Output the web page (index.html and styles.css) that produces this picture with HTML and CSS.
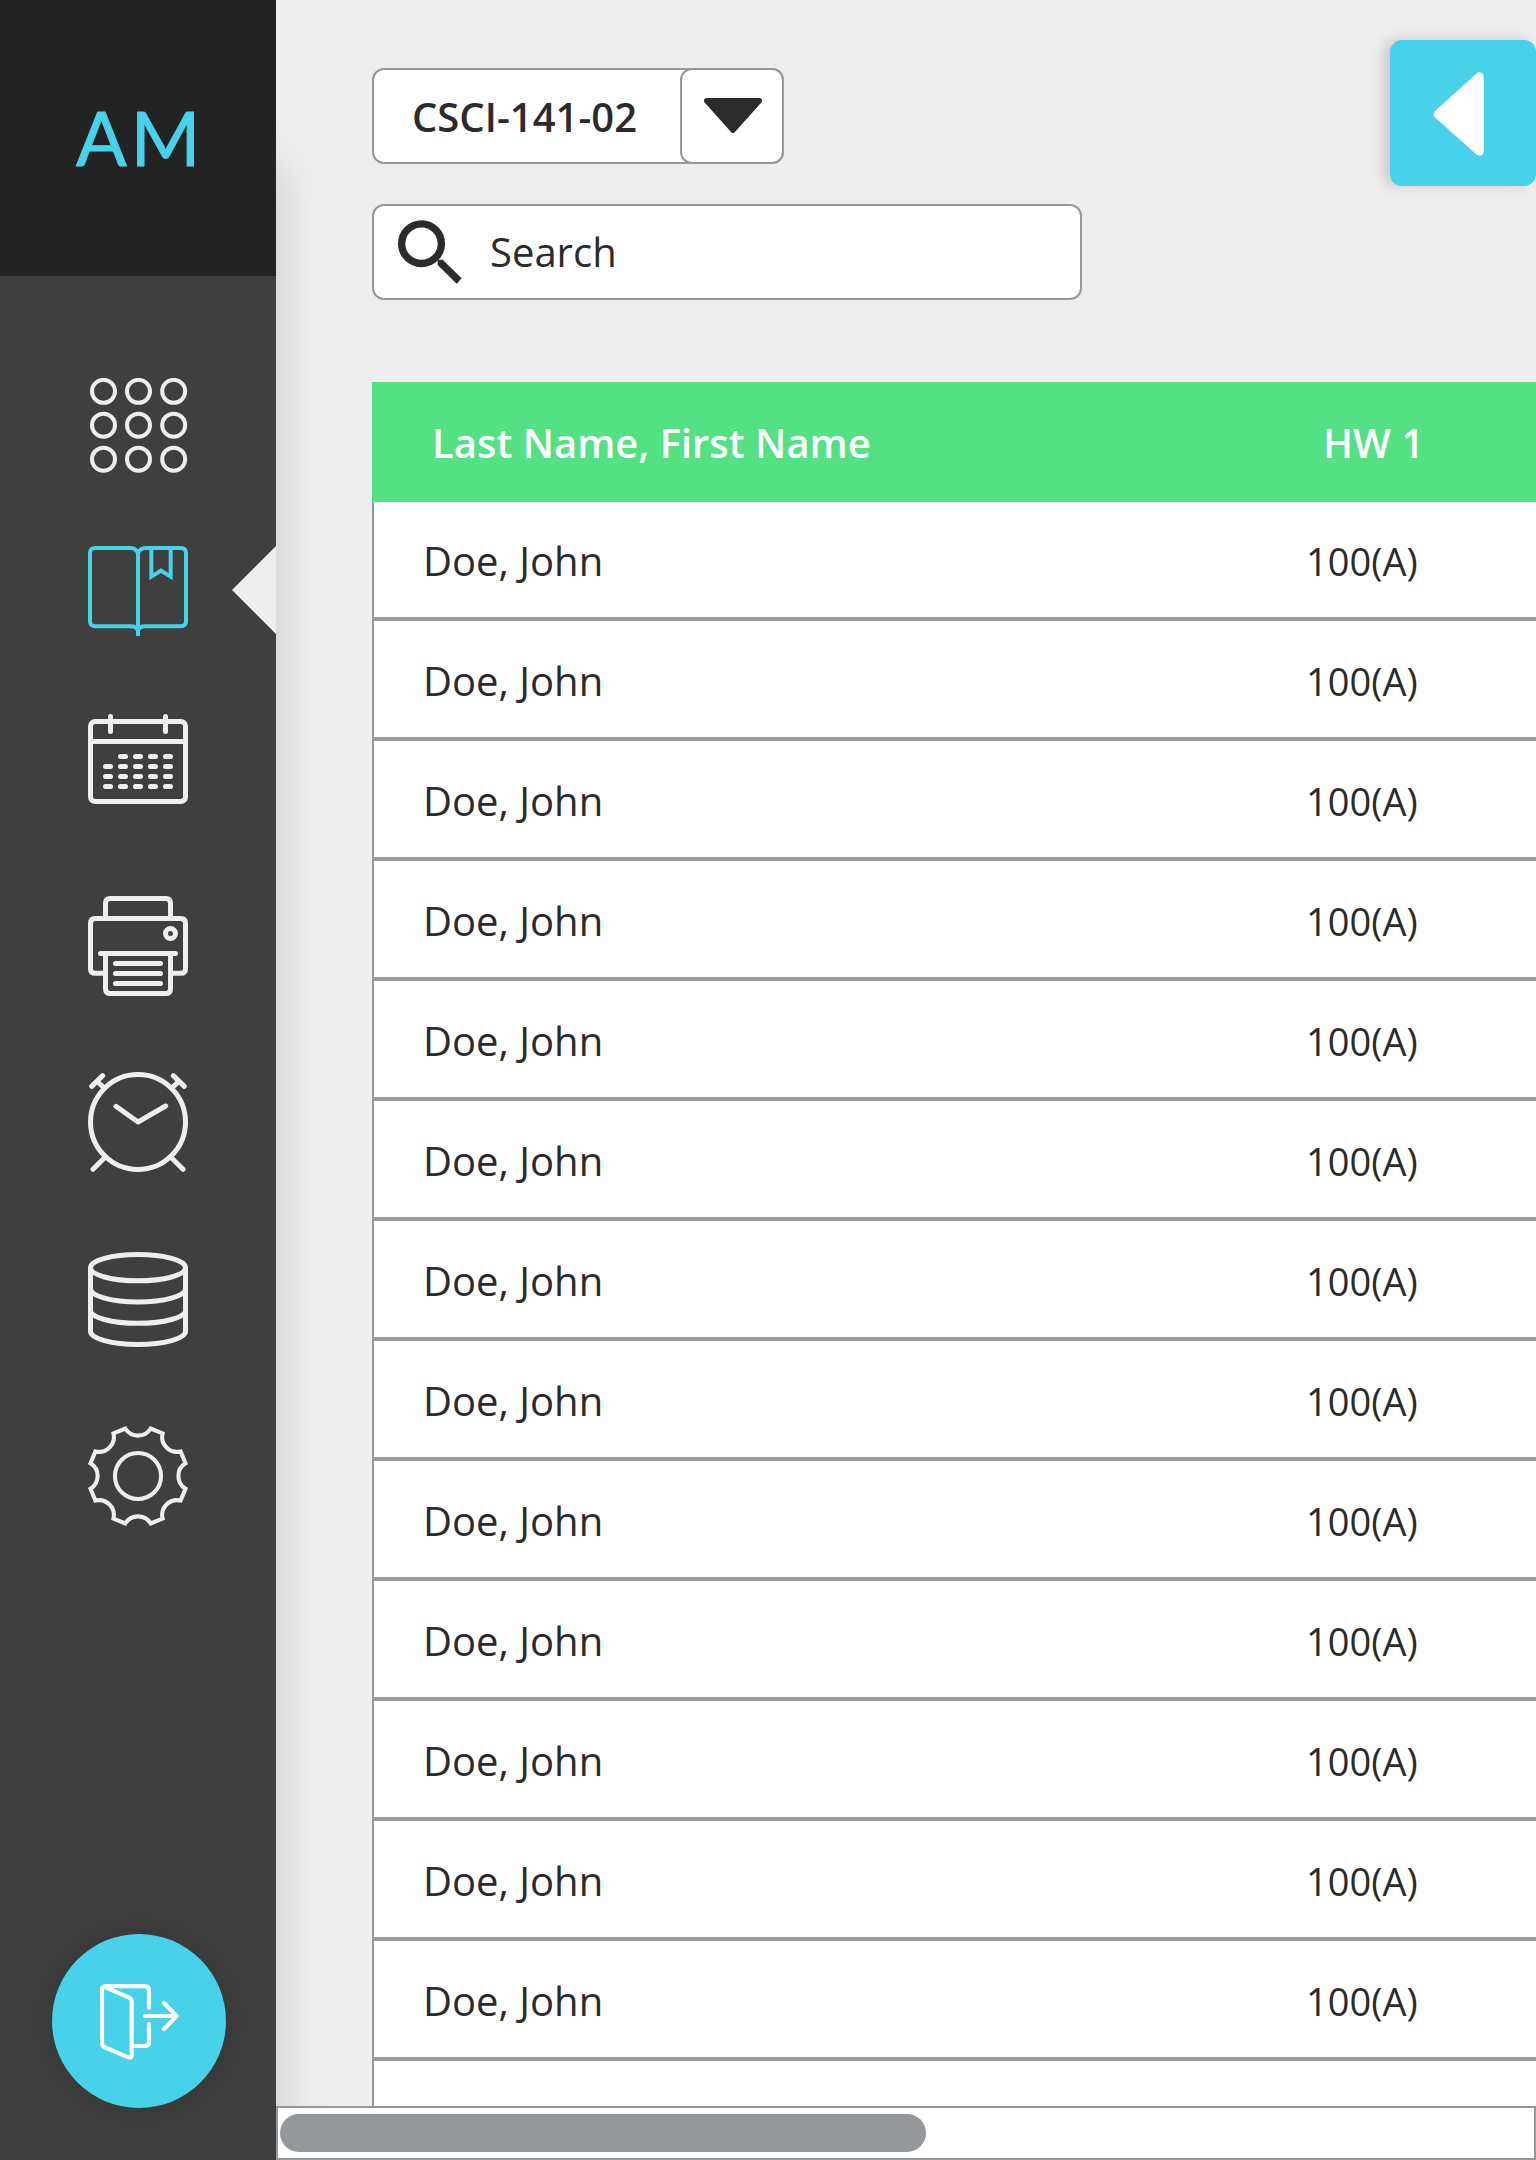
FILE: index.html
```html
<!DOCTYPE html>
<html lang="en">
<head>
<meta charset="utf-8">
<title>Gradebook</title>
<link rel="stylesheet" href="styles.css">
</head>
<body>
<div class="app">
  <aside class="sidebar">
    <div class="brand">AM</div>
    <nav class="nav">
      <a class="nav-item nav-dashboard"><svg class="icon" viewBox="84 84 300 285" stroke-width="12">
        <circle cx="130.500" cy="124" r="34.500"/><circle cx="235.500" cy="124" r="34.500"/><circle cx="341" cy="124" r="34.500"/>
        <circle cx="130.500" cy="225.500" r="34.500"/><circle cx="235.500" cy="225.500" r="34.500"/><circle cx="341" cy="225.500" r="34.500"/>
        <circle cx="130.500" cy="327.500" r="34.500"/><circle cx="235.500" cy="327.500" r="34.500"/><circle cx="341" cy="327.500" r="34.500"/>
      </svg></a>
      <a class="nav-item nav-grades active"><svg class="icon" viewBox="84 588 300 270" stroke-width="12">
        <path d="M234 610Q228 594 212 594H106Q90 594 90 610V813Q90 829 106 829H212Q230 829 234 842"/>
        <path d="M234 610Q240 594 256 594H362Q378 594 378 610V813Q378 829 362 829H256Q238 829 234 842"/>
        <path d="M234 602V858"/><path d="M274 594V680L303 662L332 680V594"/>
      </svg></a>
      <a class="nav-item nav-calendar"><svg class="icon" viewBox="84 72 300 270" stroke-width="15" stroke-linecap="round">
        <rect x="91.500" y="94.500" width="285" height="240" rx="14"/>
        <path d="M92 154.500H376M151.500 79.500V124.500M316.500 79.500V124.500"/>
        <path d="M181.500 199.500h15m30 0h15m30 0h15m30 0h15"/>
        <path d="M136.500 229.500h15m30 0h15m30 0h15m30 0h15m30 0h15"/>
        <path d="M136.500 259.500h15m30 0h15m30 0h15m30 0h15m30 0h15"/>
        <path d="M136.500 289.500h15m30 0h15m30 0h15m30 0h15m30 0h15"/>
      </svg></a>
      <a class="nav-item nav-print"><svg class="icon" viewBox="84 618 300 300" stroke-width="15">
        <path d="M136.500 850H106Q91.500 850 91.500 836V700Q91.500 685.500 106 685.500H362Q376.500 685.500 376.500 700V836Q376.500 850 362 850H331.500"/>
        <path d="M136.500 685V640q0-14.500 14.500-14.500H317q14.500 0 14.500 14.500V685"/>
        <circle cx="331.500" cy="730.500" r="15"/>
        <path d="M136.500 790V896q0 14.500 14.500 14.500H317q14.500 0 14.500-14.500V790"/>
        <path stroke-linecap="round" d="M121.500 790.500H346.500M166.500 820.500H301.500M166.500 850.500H301.500M166.500 880.500H301.500"/>
      </svg></a>
      <a class="nav-item nav-clock"><svg class="icon" viewBox="84 66 300 300" stroke-width="15" stroke-linecap="round" stroke-linejoin="round">
        <circle cx="234" cy="216" r="142.500"/>
        <path d="M168 169L234 216L317 168"/>
        <path d="M133 324L99 358M335 324L369 358M95 109L128 77M373 109L340 77M113 95L130 112M355 95L338 112"/>
      </svg></a>
      <a class="nav-item nav-data"><svg class="icon" viewBox="84 606 300 285" stroke-width="15">
        <ellipse cx="234" cy="653" rx="142.500" ry="39.500"/>
        <path d="M91.500 653V844A142.500 39.500 0 0 0 376.500 844V653"/>
        <path d="M91.500 716.500A142.500 39.500 0 0 0 376.500 716.500M91.500 780.500A142.500 39.500 0 0 0 376.500 780.500"/>
      </svg></a>
      <a class="nav-item nav-settings"><svg class="icon" viewBox="-147.500 -147.500 295 295" stroke-width="12">
        <path d="M-37.500-140.100A44 44 0 0 0 37.500-140.100L72.500-125.600A44 44 0 0 0 125.600-72.500L140.100-37.500A44 44 0 0 0 140.100 37.500L125.600 72.500A44 44 0 0 0 72.500 125.600L37.500 140.100A44 44 0 0 0-37.500 140.100L-72.500 125.600A44 44 0 0 0-125.600 72.500L-140.100 37.500A44 44 0 0 0-140.100-37.500L-125.600-72.500A44 44 0 0 0-72.500-125.600Z"/>
        <circle r="68"/>
      </svg></a>
      <a class="logout"><svg class="logout-icon" viewBox="210 252 237 228">
        <path d="M216 268V428Q216 438 225 442L295 472Q305 475 305 466V305Q305 296 296 292L228 263Q216 259 216 268"/>
        <path d="M224 258.500H342Q357 258.500 357 272V323M357 372V425Q357 438 344 438H308M344 348H440M402 309L440 348L402 387"/>
      </svg></a>
    </nav>
  </aside>
  <main class="main">
    <section class="content">
      <header class="toolbar">
        <div class="filters">
          <div class="select">
            <span class="select-label">CSCI-141-02</span>
            <span class="select-button"><svg class="caret" viewBox="1032 144 174 105"><path d="M1040 152H1198L1119 241Z"/></svg></span>
          </div>
          <div class="search">
            <svg class="search-icon" viewBox="114 510 192 192"><circle cx="184.500" cy="581" r="59.500"/><path class="handle" d="M233 629H248L305 685L290 701L233 645Z"/></svg>
            <span class="search-text">Search</span>
          </div>
        </div>
        <div class="toggle"><svg class="toggle-icon" viewBox="580 155 152 253"><path d="M719 169V394L594 282Z"/></svg></div>
      </header>
      <div class="table">
        <div class="thead"><span class="name">Last Name, First Name</span><span class="head-grade">HW 1</span></div>
        <div class="row"><span class="name">Doe, John</span><span class="grade">100(A)</span></div>
        <div class="row"><span class="name">Doe, John</span><span class="grade">100(A)</span></div>
        <div class="row"><span class="name">Doe, John</span><span class="grade">100(A)</span></div>
        <div class="row"><span class="name">Doe, John</span><span class="grade">100(A)</span></div>
        <div class="row"><span class="name">Doe, John</span><span class="grade">100(A)</span></div>
        <div class="row"><span class="name">Doe, John</span><span class="grade">100(A)</span></div>
        <div class="row"><span class="name">Doe, John</span><span class="grade">100(A)</span></div>
        <div class="row"><span class="name">Doe, John</span><span class="grade">100(A)</span></div>
        <div class="row"><span class="name">Doe, John</span><span class="grade">100(A)</span></div>
        <div class="row"><span class="name">Doe, John</span><span class="grade">100(A)</span></div>
        <div class="row"><span class="name">Doe, John</span><span class="grade">100(A)</span></div>
        <div class="row"><span class="name">Doe, John</span><span class="grade">100(A)</span></div>
        <div class="row"><span class="name">Doe, John</span><span class="grade">100(A)</span></div>
        <div class="row"></div>
      </div>
    </section>
    <div class="scrollbar"><div class="thumb"></div></div>
  </main>
</div>
</body>
</html>
```
FILE: styles.css
```css
* { box-sizing: border-box; }
body {
  margin: 0;
  background: #eee;
  color: #2b2b2b;
  font: 40px/1.3 "Open Sans", sans-serif;
}
svg { display: block; flex: none; }
.app { display: flex; width: 1536px; height: 2160px; overflow: hidden; }

.sidebar {
  position: relative;
  z-index: 1;
  display: flex;
  flex-direction: column;
  flex: none;
  width: 276px;
}
.brand {
  position: relative;
  z-index: 1;
  flex: none;
  height: 276px;
  padding-left: 76px;
  background: #232323;
  color: #48d2ea;
  font: 75px/275px Lato, sans-serif;
  letter-spacing: 4px;
  -webkit-text-stroke: 1px #48d2ea;
}
.nav {
  display: flex;
  flex-direction: column;
  flex: 1;
  margin-top: -112px;
  padding-top: 214px;
  background: #3f3f3f;
  box-shadow: 0 0 50px rgba(0, 0, 0, .16);
}
.nav-item { position: relative; padding-left: 88px; }
.icon { width: 100px; fill: none; stroke: #eee; }
.active .icon { stroke: #48d2ea; }
.active::after {
  content: "";
  position: absolute;
  top: 0;
  right: 0;
  width: 44px;
  height: 88px;
  background: #eee;
  clip-path: polygon(100% 0, 100% 100%, 0 50%);
}
.nav-grades { margin-top: 73px; }
.nav-calendar { margin-top: 78px; }
.nav-print { margin-top: 92px; }
.nav-clock { margin-top: 76px; }
.nav-data { margin-top: 80px; }
.nav-settings { margin-top: 79px; }
.logout {
  display: flex;
  align-items: center;
  justify-content: center;
  width: 174px;
  height: 174px;
  margin: auto 0 52px 52px;
  padding: 2px 0 0 1px;
  border-radius: 50%;
  background: #48d2ea;
  box-shadow: 0 0 36px rgba(0, 0, 0, .16);
}
.logout-icon {
  width: 79px;
  height: 76px;
  fill: none;
  stroke: #fff;
  stroke-width: 12.5;
  stroke-linecap: round;
  stroke-linejoin: round;
}

.main { display: flex; flex-direction: column; flex: 1; min-width: 0; }
.content { flex: 1; min-height: 0; padding: 40px 0 0 96px; overflow: hidden; }
.toolbar { display: flex; justify-content: space-between; height: 342px; }
.filters { display: flex; flex-direction: column; gap: 40px; padding-top: 28px; }
.select, .search, .select-button {
  display: flex;
  align-items: center;
  height: 96px;
  border: 2px solid #95989a;
  border-radius: 12px;
  background: #fff;
}
.select { width: 412px; justify-content: space-between; padding-left: 38px; }
.select-label { padding-top: 2px; font-weight: 600; }
.select-button { width: 104px; margin-right: -2px; padding: 0 0 2px 22px; }
.caret { width: 58px; height: 35px; fill: #2b2b2b; stroke: #2b2b2b; stroke-width: 16; stroke-linejoin: round; }
.search { width: 710px; padding-left: 24px; gap: 28px; }
.search-text { padding-bottom: 1px; }
.search-icon { width: 64px; height: 64px; fill: none; stroke: #2b2b2b; stroke-width: 22; }
.handle { fill: #2b2b2b; stroke: none; }
.toggle {
  display: flex;
  align-items: center;
  width: 146px;
  height: 146px;
  padding: 2px 0 0 43px;
  border-radius: 12px;
  background: #48d2ea;
  box-shadow: -6px 0 14px rgba(0, 0, 0, .16);
}
.toggle-icon { width: 51px; height: 84px; fill: #fff; stroke: #fff; stroke-width: 26; stroke-linejoin: round; }

.table { width: 1400px; }
.thead {
  position: relative;
  display: flex;
  align-items: center;
  height: 120px;
  margin-bottom: -3px;
  padding: 2px 0 0 60px;
  background: #54e184;
  color: #fff;
  font-weight: 600;
}
.row {
  display: flex;
  align-items: center;
  height: 120px;
  padding: 4px 0 0 49px;
  border: 2px solid #999b9c;
  border-left-color: #95989a;
  background: #fff;
}
.name { width: 882px; }
.head-grade { padding-left: 9px; }
.grade { padding: 1px 0 0 1px; font-size: 38px; }

.scrollbar {
  position: relative;
  z-index: 2;
  flex: none;
  height: 54px;
  padding: 6px 2px;
  border: 2px solid #95989a;
  background: #fff;
}
.thumb { width: 646px; height: 38px; border-radius: 19px; background: #95989a; }
```
